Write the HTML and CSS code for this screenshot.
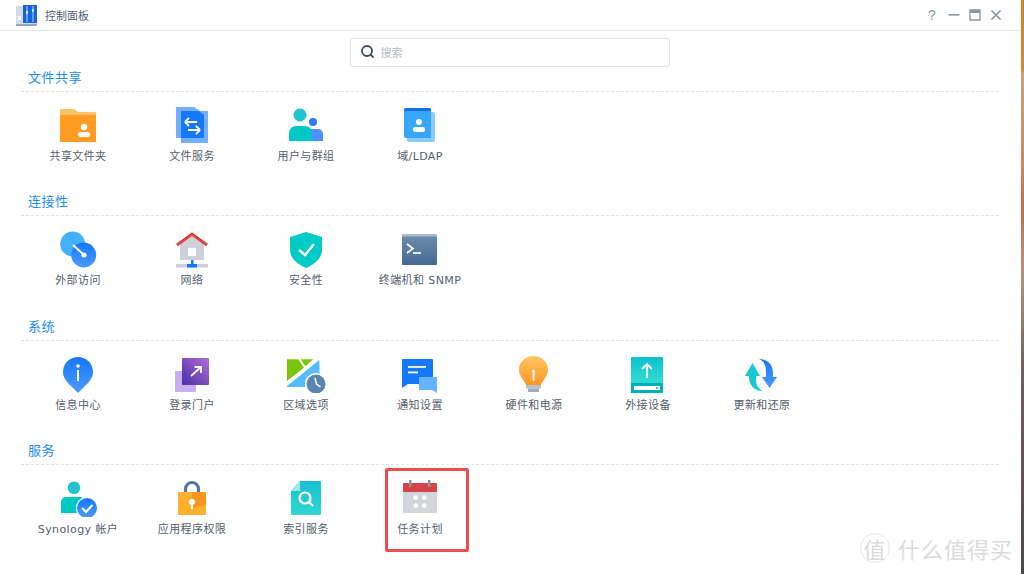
FILE: index.html
```html
<!DOCTYPE html>
<html lang="zh-CN">
<head>
<meta charset="UTF-8">
<meta name="viewport" content="width=device-width, initial-scale=1.0">
<title>控制面板</title>
<link rel="stylesheet" href="styles.css">
</head>
<body>

<div class="window">
    <div class="titlebar">
        <svg class="app-logo" width="24" height="24" viewBox="0 0 24 24">
            <rect x="1" y="3" width="21" height="19" rx="1" fill="#d5d9e8"/>
            <rect x="1" y="21" width="21" height="2" fill="#9aa5c4"/>
            <path d="M8 2h14v18H8z" fill="#1565d8"/>
            <path d="M12 3v16M18 3v16" stroke="#7fb4f2" stroke-width="1.4"/>
            <rect x="11" y="8" width="2" height="3" fill="#cfe3fb"/>
            <rect x="17" y="6" width="2" height="3" fill="#cfe3fb"/>
            <ellipse cx="4.6" cy="15" rx="1.6" ry="2.4" fill="#fff"/>
        </svg>
        <span class="title">控制面板</span>
        <div class="win-btns">
            <span class="help">?</span>
            <svg width="12" height="12" viewBox="0 0 12 12"><rect x="0.5" y="5" width="11" height="1.6" fill="#8b96a3"/></svg>
            <svg width="12" height="12" viewBox="0 0 12 12"><path d="M1 1h10v10H1z" fill="none" stroke="#8b96a3" stroke-width="1.4"/><rect x="1" y="1" width="10" height="3" fill="#8b96a3"/></svg>
            <svg width="12" height="12" viewBox="0 0 12 12"><path d="M1.5 1.500l9 9M10.500 1.500l-9 9" stroke="#8b96a3" stroke-width="1.7"/></svg>
        </div>
    </div>

    <div class="search-row">
        <div class="search">
            <svg width="16" height="16" viewBox="0 0 16 16"><circle cx="7" cy="7" r="5" fill="none" stroke="#3f4a5a" stroke-width="1.8"/><path d="M10.600 10.600l3 3" stroke="#3f4a5a" stroke-width="1.8"/></svg>
            <span>搜索</span>
        </div>
    </div>

    <section class="group first">
        <h2>文件共享</h2>
        <div class="items">
            <div class="item">
                <svg width="40" height="40" viewBox="0 0 40 40">
                    <path d="M2 6a1 1 0 0 1 1-1h13l4 3h17a1 1 0 0 1 1 1v29H3a1 1 0 0 1-1-1z" fill="#ffc069"/>
                    <path d="M2 11h36v26a1 1 0 0 1-1 1H3a1 1 0 0 1-1-1z" fill="#ff9c22"/>
                    <circle cx="26" cy="23" r="3.2" fill="#fff"/>
                    <rect x="20" y="28" width="12" height="5" rx="2" fill="#fff"/>
                </svg>
                <span>共享文件夹</span>
            </div>
            <div class="item">
                <svg width="40" height="40" viewBox="0 0 40 40">
                    <path d="M4 3h18l6 4h8v32H9v-5H4z" fill="#74aefc"/>
                    <path d="M9 7h18l5 4v23H9z" fill="#1677ff"/>
                    <path d="M25 18H13M13 18l4-4M13 18l4 4M16 26h12M28 26l-4-4M28 26l-4 4" fill="none" stroke="#fff" stroke-width="1.8"/>
                </svg>
                <span>文件服务</span>
            </div>
            <div class="item">
                <svg width="40" height="40" viewBox="0 0 40 40">
                    <circle cx="14" cy="11" r="6.5" fill="#1fc4cc"/>
                    <circle cx="27" cy="18" r="4" fill="#2a7bf6"/>
                    <path d="M22 37V30a5 5 0 0 1 5-5h5a5 5 0 0 1 5 5v7z" fill="#4a90ff"/>
                    <path d="M3 37v-8a7 7 0 0 1 7-7h9a7 7 0 0 1 7 7v8z" fill="#00c8c4"/>
                </svg>
                <span>用户与群组</span>
            </div>
            <div class="item">
                <svg width="40" height="40" viewBox="0 0 40 40">
                    <rect x="7" y="8" width="28" height="30" rx="2" fill="#8accff"/>
                    <path d="M4 6a2 2 0 0 1 2-2h23a2 2 0 0 1 2 2v28H6a2 2 0 0 1-2-2z" fill="#36a6ff"/>
                    <path d="M4 7V6a2 2 0 0 1 2-2h23a2 2 0 0 1 2 2v1z" fill="#1670ee"/>
                    <circle cx="19" cy="18" r="3" fill="#fff"/>
                    <rect x="13" y="23" width="12" height="5" rx="2" fill="#fff"/>
                </svg>
                <span>域/LDAP</span>
            </div>
        </div>
    </section>

    <section class="group">
        <h2>连接性</h2>
        <div class="items">
            <div class="item">
                <svg width="40" height="40" viewBox="0 0 40 40">
                    <defs><linearGradient id="globe" x1="0" y1="0" x2="0" y2="1"><stop offset="0" stop-color="#1677ff"/><stop offset="1" stop-color="#4a9bff"/></linearGradient></defs>
                    <circle cx="14.700" cy="16" r="12.500" fill="#45b0fb"/>
                    <circle cx="25.700" cy="27" r="12.500" fill="url(#globe)"/>
                    <path d="M15 17l11 10" stroke="#fff" stroke-width="1.8"/>
                    <circle cx="26" cy="27" r="2.500" fill="#fff"/>
                </svg>
                <span>外部访问</span>
            </div>
            <div class="item">
                <svg width="40" height="40" viewBox="0 0 40 40">
                    <path d="M8 16L20 6l12 10v16H8z" fill="#ced2d8"/>
                    <path d="M5 17L20 6l15 11" fill="none" stroke="#d9443f" stroke-width="3"/>
                    <rect x="16" y="20" width="8" height="8" rx="1" fill="#fff"/>
                    <rect x="4" y="36" width="32" height="3.500" fill="#ced2d8"/>
                    <rect x="19" y="32" width="2.500" height="4" fill="#1677ff"/>
                    <rect x="15" y="36" width="10" height="3.500" fill="#1677ff"/>
                </svg>
                <span>网络</span>
            </div>
            <div class="item">
                <svg width="40" height="40" viewBox="0 0 40 40">
                    <path d="M20 4l16 5v13c0 8-7 14-16 18C11 36 4 30 4 22V9z" fill="#00cbc6"/>
                    <path d="M13 22l6 5 9-11" fill="none" stroke="#fff" stroke-width="2.4"/>
                </svg>
                <span>安全性</span>
            </div>
            <div class="item">
                <svg width="40" height="40" viewBox="0 0 40 40">
                    <defs><linearGradient id="term" x1="0" y1="0" x2="0" y2="1"><stop offset="0" stop-color="#6f8eae"/><stop offset="1" stop-color="#456a92"/></linearGradient></defs>
                    <rect x="2" y="6" width="35" height="31" rx="1" fill="url(#term)"/>
                    <rect x="2" y="6" width="35" height="2.500" fill="#a8bdd0"/>
                    <path d="M7 16l6 4.500-6 4.500" fill="none" stroke="#fff" stroke-width="1.7"/>
                    <path d="M13 25h8" stroke="#fff" stroke-width="1.7"/>
                </svg>
                <span>终端机和 SNMP</span>
            </div>
        </div>
    </section>

    <section class="group">
        <h2>系统</h2>
        <div class="items">
            <div class="item">
                <svg width="40" height="40" viewBox="0 0 40 40">
                    <defs><linearGradient id="pin" x1="0" y1="0" x2="0" y2="1"><stop offset="0" stop-color="#1677ff"/><stop offset="1" stop-color="#4a9bff"/></linearGradient></defs>
                    <path d="M20 4c8.300 0 15 6.500 15 15 0 5-3 9-6.500 12.500L20 40l-8.500-8.500C8 28 5 24 5 19 5 10.500 11.700 4 20 4z" fill="url(#pin)"/>
                    <circle cx="20" cy="13" r="1.800" fill="#fff"/>
                    <rect x="19" y="17" width="2" height="11" fill="#fff"/>
                </svg>
                <span>信息中心</span>
            </div>
            <div class="item">
                <svg width="40" height="40" viewBox="0 0 40 40">
                    <defs><linearGradient id="portal" x1="1" y1="0" x2="0" y2="1"><stop offset="0" stop-color="#b06dd4"/><stop offset="1" stop-color="#4a2fa8"/></linearGradient></defs>
                    <rect x="3" y="18" width="21" height="21" rx="1" fill="#c9aef0"/>
                    <rect x="10" y="5" width="27" height="27" rx="1" fill="url(#portal)"/>
                    <path d="M19 23l10-9M22.500 14H29v6" fill="none" stroke="#fff" stroke-width="1.800"/>
                </svg>
                <span>登录门户</span>
            </div>
            <div class="item">
                <svg width="40" height="40" viewBox="0 0 40 40">
                    <path d="M1 6.300h11.300L18 14.700 1 28z" fill="#7cc50d"/>
                    <path d="M14.700 6.300h12.600l-8 7z" fill="#7cc50d"/>
                    <path d="M1 33L33.300 7 34 34H1z" fill="#55bdff"/>
                    <circle cx="30" cy="31" r="11" fill="#fff"/>
                    <circle cx="30" cy="31" r="9.500" fill="#5b86b0"/>
                    <path d="M29 25l1.500 6 4 3" fill="none" stroke="#fff" stroke-width="1.500"/>
                </svg>
                <span>区域选项</span>
            </div>
            <div class="item">
                <svg width="40" height="40" viewBox="0 0 40 40">
                    <path d="M2 7a1 1 0 0 1 1-1h29a1 1 0 0 1 1 1v24H8l-6 4z" fill="#1677ff"/>
                    <rect x="8" y="13" width="18" height="1.800" fill="#fff"/>
                    <rect x="8" y="18.500" width="10" height="1.800" fill="#fff"/>
                    <path d="M19 24h18v16l-5-3H19z" fill="#66b4ff"/>
                </svg>
                <span>通知设置</span>
            </div>
            <div class="item">
                <svg width="40" height="40" viewBox="0 0 40 40">
                    <defs><linearGradient id="bulb" x1="0" y1="0" x2="0" y2="1"><stop offset="0" stop-color="#ffc562"/><stop offset="1" stop-color="#ff9622"/></linearGradient></defs>
                    <path d="M19.500 3C27.500 3 34 9 34 16.500c0 7-5 10-7 15.500H12c-2-5.500-7-8.500-7-15.500C5 9 11.500 3 19.500 3z" fill="url(#bulb)"/>
                    <circle cx="19.500" cy="18" r="1.600" fill="#fff"/>
                    <rect x="18.700" y="18" width="1.800" height="10" fill="#fff"/>
                    <rect x="12" y="32" width="15" height="3.500" fill="#b9c1cb"/>
                    <rect x="14" y="35.500" width="11" height="3.500" fill="#a2abb6"/>
                </svg>
                <span>硬件和电源</span>
            </div>
            <div class="item">
                <svg width="40" height="40" viewBox="0 0 40 40">
                    <defs><linearGradient id="ext" x1="0" y1="0" x2="0" y2="1"><stop offset="0" stop-color="#0dc0cf"/><stop offset="1" stop-color="#32dcd0"/></linearGradient></defs>
                    <path d="M3 5a1 1 0 0 1 1-1h30a1 1 0 0 1 1 1v25H3z" fill="url(#ext)"/>
                    <rect x="3" y="30" width="32" height="10" fill="#00b0ba"/>
                    <rect x="6" y="33" width="26" height="4" fill="#fff"/>
                    <circle cx="29" cy="35" r="1" fill="#00b0ba"/>
                    <path d="M19 25V11M14 16l5-5 5 5" fill="none" stroke="#fff" stroke-width="1.800"/>
                </svg>
                <span>外接设备</span>
            </div>
            <div class="item">
                <svg width="40" height="40" viewBox="0 0 40 40">
                    <defs><linearGradient id="upd" x1="0" y1="0" x2="0" y2="1"><stop offset="0" stop-color="#1677ff"/><stop offset="1" stop-color="#4a9bff"/></linearGradient></defs>
                    <path d="M17 6C26 6 31 12 31 20v4h4l-7.500 11L20 24h4v-4c0-8-2-12-7-14z" fill="url(#upd)"/>
                    <path d="M21 38C12 38 7 32 7 24v-1H3l7.500-13L18 23h-4v2c0 7 2 11 7 13z" fill="#14c8d4"/>
                </svg>
                <span>更新和还原</span>
            </div>
        </div>
    </section>

    <section class="group">
        <h2>服务</h2>
        <div class="items">
            <div class="item">
                <svg width="40" height="40" viewBox="0 0 40 40">
                    <circle cx="16" cy="10.700" r="6.300" fill="#1fc4cc"/>
                    <path d="M3 36V25a5 5 0 0 1 5-5h14a5 5 0 0 1 5 5v11z" fill="#00c8c4"/>
                    <circle cx="29" cy="31" r="11" fill="#fff"/>
                    <circle cx="29" cy="31" r="10" fill="url(#pin)"/>
                    <path d="M24 31l4 4 6.500-7" fill="none" stroke="#fff" stroke-width="2.200"/>
                </svg>
                <span>Synology 帐户</span>
            </div>
            <div class="item">
                <svg width="40" height="40" viewBox="0 0 40 40">
                    <path d="M13.500 16v-4a6.500 6.500 0 0 1 13 0v4" fill="none" stroke="#56789d" stroke-width="3.200"/>
                    <rect x="6" y="15" width="28" height="23" rx="1" fill="#ffb02e"/>
                    <path d="M20 15h13a1 1 0 0 1 1 1v12l-14 3z" fill="#fb951f"/>
                    <circle cx="20" cy="25" r="3" fill="#fff"/>
                    <rect x="19" y="26" width="2" height="6" fill="#fff"/>
                </svg>
                <span>应用程序权限</span>
            </div>
            <div class="item">
                <svg width="40" height="40" viewBox="0 0 40 40">
                    <defs><linearGradient id="idx" x1="0" y1="0" x2="0" y2="1"><stop offset="0" stop-color="#18bfd2"/><stop offset="1" stop-color="#30d8d0"/></linearGradient></defs>
                    <path d="M5 14L14 4h20a1 1 0 0 1 1 1v32a1 1 0 0 1-1 1H6a1 1 0 0 1-1-1z" fill="url(#idx)"/>
                    <path d="M5 14l9-10v10z" fill="#9ae8ea"/>
                    <circle cx="19" cy="21" r="5.500" fill="none" stroke="#fff" stroke-width="2.200"/>
                    <path d="M23 25l4 4" stroke="#fff" stroke-width="2.200"/>
                </svg>
                <span>索引服务</span>
            </div>
            <div class="item marked">
                <svg width="40" height="40" viewBox="0 0 40 40">
                    <path d="M3 7a1 1 0 0 1 1-1h32a1 1 0 0 1 1 1v8H3z" fill="#d64545"/>
                    <path d="M3 15h34v20a1 1 0 0 1-1 1H4a1 1 0 0 1-1-1z" fill="#d2d6dc"/>
                    <rect x="9" y="3" width="2.500" height="7" fill="#8795a6"/>
                    <rect x="28" y="3" width="2.500" height="7" fill="#8795a6"/>
                    <circle cx="15.700" cy="20.700" r="2.400" fill="#fff"/>
                    <circle cx="24.300" cy="20.700" r="2.400" fill="#fff"/>
                    <circle cx="15.700" cy="28.700" r="2.400" fill="#fff"/>
                    <circle cx="24.300" cy="28.700" r="2.400" fill="#fff"/>
                </svg>
                <span>任务计划</span>
            </div>
        </div>
    </section>

    <div class="watermark"><span class="wm-seal">值</span><span>什么值得买</span></div>
</div>

</body>
</html>
```

FILE: styles.css
```css
* {
    box-sizing: border-box;
}

body {
    margin: 0;
    width: 1024px;
    height: 574px;
    overflow: hidden;
    background: linear-gradient(180deg, #d0812f 0%, #d0893f 12%, #bfa780 13%, #c98a66 28%, #c2704f 36%, #b0937f 48%, #6f5f60 65%, #4e4650 100%);
    font-family: "Noto Sans CJK SC", "Noto Sans", sans-serif;
}

.window {
    position: relative;
    width: 1021px;
    height: 574px;
    background-color: #fff;
    color: #55606b;
}

.titlebar {
    display: flex;
    align-items: center;
    height: 31px;
    padding-left: 15px;
    border-bottom: 1px solid #e3eaf2;
}

.app-logo {
    margin-right: 6px;
}

.title {
    font-size: 11px;
}

.win-btns {
    display: flex;
    align-items: center;
    gap: 9px;
    margin-left: auto;
    padding-right: 19px;
}

.help {
    width: 12px;
    margin-right: 1px;
    color: #8b96a3;
    font-family: "Liberation Sans", sans-serif;
    font-size: 14px;
    line-height: 14px;
    text-align: center;
}

.search-row {
    display: flex;
    justify-content: center;
    padding-top: 7px;
    padding-right: 2px;
}

.search {
    display: flex;
    align-items: center;
    gap: 5px;
    width: 320px;
    height: 29px;
    padding-left: 9px;
    padding-bottom: 1px;
    border: 1px solid #dce5ee;
    border-radius: 3px;
    color: #b5bbc2;
    font-size: 11px;
}

.group {
    margin: 0 22px 0 21px;
    padding-top: 18.3px;
}

.group.first {
    padding-top: 0;
    margin-top: 1px;
}

.group h2 {
    margin: 0;
    height: 24px;
    padding-left: 7px;
    border-bottom: 1px dashed #dce5ee;
    color: #1c8cf0;
    font-size: 13px;
    font-weight: 400;
    letter-spacing: 0.5px;
    line-height: 18px;
}

.items {
    display: flex;
    padding-top: 12px;
}

.item {
    display: flex;
    flex-direction: column;
    align-items: center;
    flex: none;
    width: 114px;
    height: 70px;
    font-family: "DejaVu Sans", "Noto Sans CJK SC", sans-serif;
    font-size: 11px;
    letter-spacing: 0.4px;
    white-space: nowrap;
}

.item svg {
    flex: none;
    margin-bottom: 5px;
}

.item span {
    line-height: 16px;
}

.marked {
    position: relative;
}

.marked::after {
    content: "";
    position: absolute;
    left: 22px;
    top: -9px;
    box-sizing: border-box;
    width: 84px;
    height: 84px;
    border: 3px solid #ee4d50;
    border-radius: 2px;
}

.watermark {
    position: absolute;
    right: 8px;
    bottom: 10px;
    display: flex;
    align-items: center;
    gap: 8px;
    color: #dcdcdc;
    font-size: 22px;
    letter-spacing: 1px;
}

.wm-seal {
    display: flex;
    align-items: center;
    justify-content: center;
    width: 30px;
    height: 30px;
    border: 1px solid #e8e8e8;
    border-radius: 50%;
    font-size: 22px;
}
```
